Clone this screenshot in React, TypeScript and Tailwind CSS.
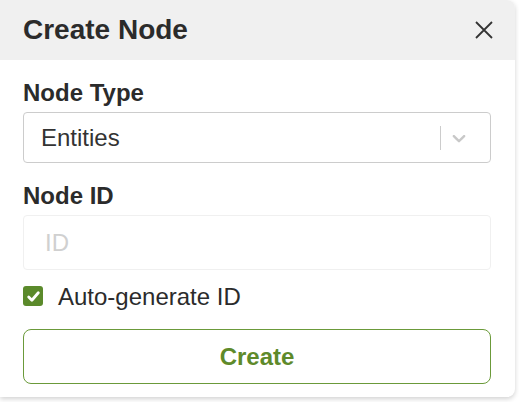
import { useState } from 'react'

export default function App() {
  const [auto, setAuto] = useState(true)

  return (
    <div className="w-[519px] h-[402px] bg-white font-['Liberation_Sans',Arial,sans-serif] text-[#2b2b2b]">
      <div className="w-[515px] h-[397px] bg-white rounded-r-[8px] overflow-hidden shadow-[0_2px_5px_rgba(0,0,0,0.18)]">
        {/* Header */}
        <div className="h-[60px] bg-[#f0f0f0] flex items-center justify-between pl-[23px] pr-[22px]">
          <h2 className="text-[28px] font-bold leading-none">Create Node</h2>
          <button className="w-[18px] h-[18px] flex items-center justify-center text-[#333]">
            <svg width="18" height="18" viewBox="0 0 18 18" fill="none" stroke="currentColor" strokeWidth="1.8">
              <path d="M1 1L17 17M17 1L1 17" />
            </svg>
          </button>
        </div>

        {/* Body */}
        <div className="pl-[23px] pr-[24px] pt-[18px] flex flex-col">
          <label className="text-[24px] font-bold leading-[29px]">Node Type</label>
          <div className="mt-[5px] h-[51px] border border-[#cccccc] rounded-[4px] flex items-center pl-[17px]">
            <span className="flex-1 text-[24px] leading-[29px] text-[#333]">Entities</span>
            <span className="w-px h-[24px] bg-[#cccccc]" />
            <svg className="ml-[7px] mr-[20px]" width="22" height="22" viewBox="0 0 20 20" fill="#c8c8c8">
              <path d="M4.516 7.548c0.436-0.446 1.043-0.481 1.576 0l3.908 3.747 3.908-3.747c0.533-0.481 1.141-0.446 1.574 0 0.436 0.445 0.408 1.197 0 1.615-0.406 0.418-4.695 4.502-4.695 4.502-0.217 0.223-0.502 0.335-0.787 0.335s-0.57-0.112-0.789-0.335c0 0-4.287-4.084-4.695-4.502s-0.436-1.17 0-1.615z" />
            </svg>
          </div>

          <label className="mt-[18px] text-[24px] font-bold leading-[29px]">Node ID</label>
          <input
            disabled={auto}
            placeholder="ID"
            className="mt-[5px] h-[55px] border border-[#f0f0f0] rounded-[4px] pl-[21px] text-[24px] bg-white placeholder:text-[#d0d0d0] outline-none"
          />

          <label className="mt-[16px] h-[20px] flex items-center gap-[15px] cursor-pointer">
            <span
              onClick={() => setAuto(!auto)}
              className={`w-[20px] h-[20px] rounded-[3px] flex items-center justify-center ${auto ? 'bg-[#5b8a2b]' : 'border border-[#999] bg-white'}`}
            >
              {auto && (
                <svg width="15" height="15" viewBox="0 0 14 14" fill="none" stroke="white" strokeWidth="2.6" strokeLinecap="round" strokeLinejoin="round">
                  <path d="M2.5 7.5L5.5 10.5L11.5 3.5" />
                </svg>
              )}
            </span>
            <span className="text-[24px] leading-[29px]">Auto-generate ID</span>
          </label>

          <button className="mt-[23px] h-[55px] border border-[#6b9a3a] rounded-[8px] text-[24px] font-bold text-[#5e8a2a]">
            Create
          </button>
        </div>
      </div>
    </div>
  )
}
